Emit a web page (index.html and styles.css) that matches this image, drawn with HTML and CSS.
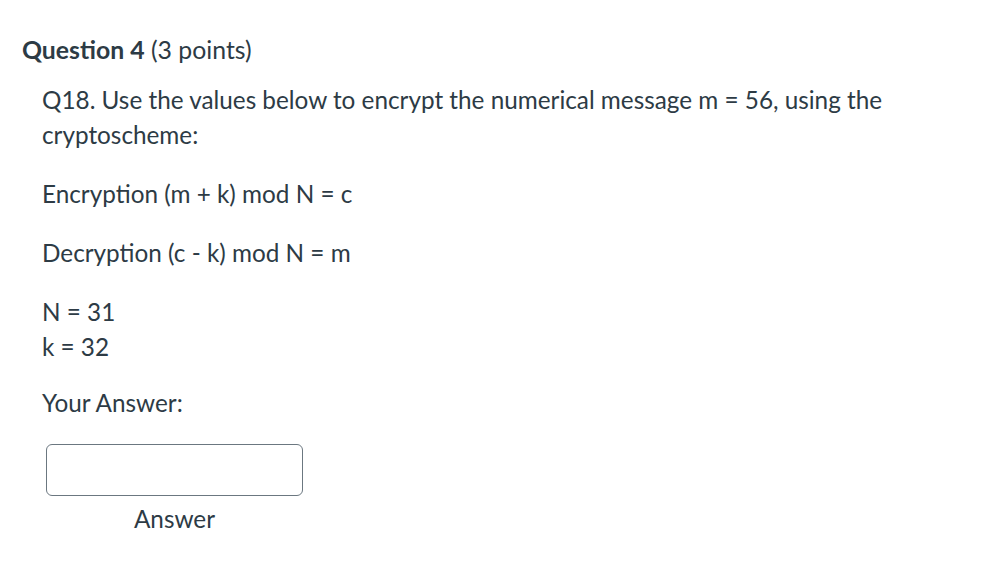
FILE: index.html
```html
<!DOCTYPE html>
<html>
<head>
<meta charset="utf-8">
<link rel="stylesheet" href="styles.css">
</head>
<body>
<div class="question">
  <h2 class="q-title"><span class="q-name">Question 4</span> <span class="q-points">(3 points)</span></h2>
  <div class="q-body">
    <p>Q18. Use the values below to encrypt the numerical message m = 56, using the cryptoscheme:</p>
    <p>Encryption (m + k) mod N = c</p>
    <p>Decryption (c - k) mod N = m</p>
    <p class="values">N = 31<br>k = 32</p>
    <p>Your Answer:</p>
    <div class="answer">
      <div class="answer-box"></div>
      <div class="answer-label">Answer</div>
    </div>
  </div>
</div>
</body>
</html>
```
FILE: styles.css
```css
html, body {
  margin: 0;
  padding: 0;
  background: #ffffff;
}
body {
  font-family: Lato, "Open Sans", sans-serif;
  color: #2d3b45;
}
.question {
  padding: 33px 0 0 22px;
}
.q-title {
  margin: 0;
  font-size: 24.8px;
  line-height: 34px;
  font-weight: normal;
}
.q-name {
  font-weight: bold;
}
.q-body {
  padding: 15px 0 0 20px;
  width: 880px;
  font-size: 24.3px;
  line-height: 35px;
}
.q-body p {
  margin: 0 0 24px 0;
}
.q-body p.values {
  margin-bottom: 21px;
}
.answer {
  display: flex;
  flex-direction: column;
  align-items: center;
  width: 257px;
  margin: 18px 0 0 4px;
}
.answer-box {
  width: 255px;
  height: 50px;
  border: 1px solid #6b7780;
  border-radius: 6px;
}
.answer-label {
  margin-top: 5px;
  line-height: 35px;
}
```
